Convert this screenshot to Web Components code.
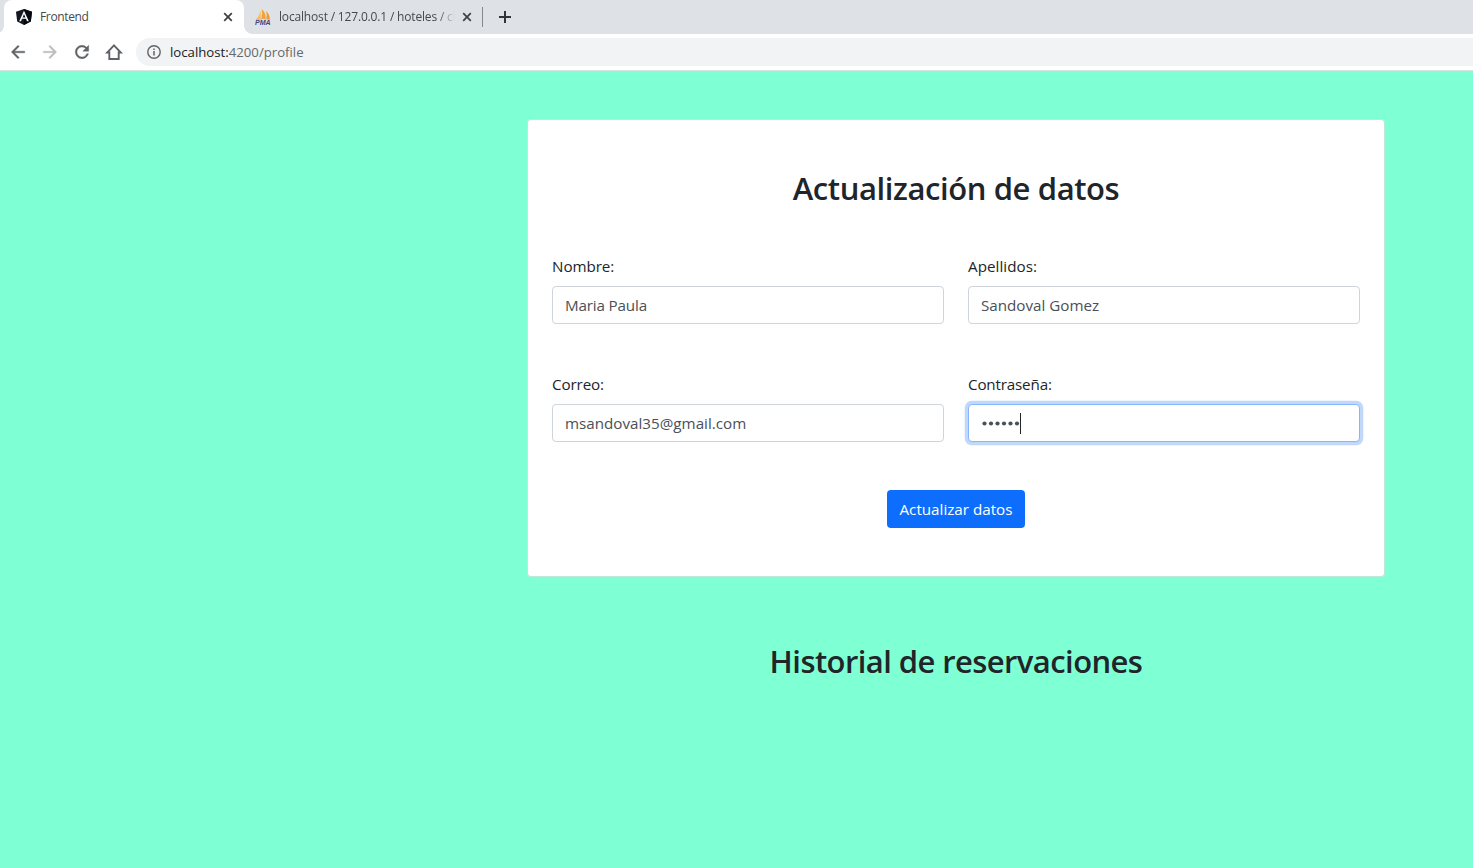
<!DOCTYPE html>
<html lang="es">
<head>
<meta charset="utf-8">
<title>Frontend</title>
<style>
html, body { margin: 0; height: 100%; overflow: hidden; }
body { font-family: "Open Sans", "Noto Sans", sans-serif; color: #212529; background: #7fffd4; }
</style>
</head>
<body>
<app-window></app-window>
<script>
const define = (name, html, init) => {
  const template = document.createElement('template');
  template.innerHTML = html;
  customElements.define(name, class extends HTMLElement {
    constructor() {
      super();
      this.attachShadow({ mode: 'open' }).append(template.content.cloneNode(true));
    }
    connectedCallback() { if (init) init(this, this.shadowRoot); }
  });
};

define('browser-tab', `
<style>
:host { display: flex; align-items: center; box-sizing: border-box; height: 34px; width: 240px; padding: 0 10px 0 12px; font-size: 12px; color: #45494d; flex: none; position: relative; }
:host([active]) { background: #fff; border-radius: 8px 8px 0 0; }
:host(:not([active])) { width: 239px; padding-left: 11px; }
:host([active])::before, :host([active])::after { content: ""; position: absolute; bottom: 0; width: 8px; height: 8px; }
:host([active])::before { left: -8px; background: radial-gradient(circle at 0 0, transparent 7.5px, #fff 8px); }
:host([active])::after { right: -8px; background: radial-gradient(circle at 100% 0, transparent 7.5px, #fff 8px); }
.icon { width: 16px; height: 16px; flex: none; display: flex; }
.title { flex: 1; margin-left: 8px; white-space: nowrap; overflow: hidden; line-height: 20px; letter-spacing: var(--track, 0); }
:host(:not([active])) .title { -webkit-mask-image: linear-gradient(90deg, #000 calc(100% - 17px), transparent); mask-image: linear-gradient(90deg, #000 calc(100% - 17px), transparent); }
.close { width: 12px; height: 12px; flex: none; margin-left: 6px; }
</style>
<div class="icon"><slot name="icon"></slot></div>
<div class="title"><slot></slot></div>
<svg class="close" viewBox="0 0 12 12"><path d="M2.2 2.2 9.8 9.8M9.8 2.2 2.2 9.8" stroke="#3c4043" stroke-width="1.7"/></svg>
`);

define('tab-strip', `
<style>
:host { display: flex; height: 34px; background: #dee1e6; padding-left: 4px; align-items: center; }
.sep { width: 1px; height: 20px; background: #85898e; margin-left: -1px; }
.plus { margin-left: 15px; width: 14px; height: 14px; }
svg { display: block; }
</style>
<browser-tab active style="--track:-.36px">
  <svg slot="icon" width="16" height="16" viewBox="0 0 16 16"><path d="M8 0 16 2.7 14.8 12.6 8 16 1.2 12.6 0 2.7Z" fill="#141a24"/><path d="M8 0 16 2.7 14.8 12.6 8 16Z" fill="#05090f"/><path fill="#fff" fill-rule="evenodd" d="M8 1.8 3.2 12.2H5L6 9.8H10L11 12.2H12.8ZM8 5.1 9.4 8.4H6.6Z"/></svg>Frontend</browser-tab>
<browser-tab style="--track:-.17px">
  <svg slot="icon" width="16" height="16" viewBox="0 0 16 16"><path d="M5.8 1.5V9.5L1.2 10.2Q4.7 6 5.8 1.5Z" fill="#f7bd68"/><path d="M6.7 0Q11.5 4.5 10.4 10L6.4 9.2Q7.8 5 6.7 0Z" fill="#f6a02d"/><path d="M11.2 2Q15 6 14.8 10.3L11.3 9.5Q12.3 6 11.2 2Z" fill="#f49a24"/><path d="M1 10.5Q8 8.7 15.2 10.5" fill="none" stroke="#df9c57" stroke-width=".7"/><text x="0" y="15.7" textLength="15.7" lengthAdjust="spacingAndGlyphs" font-family="Liberation Sans" font-size="6.8" font-weight="700" font-style="italic" fill="#45457e" letter-spacing="0">PMA</text></svg>localhost / 127.0.0.1 / hoteles / clientes</browser-tab>
<div class="sep"></div>
<svg class="plus" viewBox="0 0 14 14"><path d="M7 1V13M1 7H13" stroke="#303438" stroke-width="2"/></svg>
`);

define('address-bar', `
<style>
:host { display: flex; align-items: center; box-sizing: border-box; height: 37px; background: #fff; border-bottom: 1px solid #d5e6e0; padding-left: 8px; overflow: hidden; }
.nav { width: 20px; height: 20px; flex: none; margin-right: 12px; fill: #5f6368; }
.nav.stroked { stroke: #5f6368; stroke-width: .5; }
.off { fill: #babcbe; stroke: #babcbe; stroke-width: .4; }
.url { flex: 1; height: 28px; background: #f1f3f4; border-radius: 14px 0 0 14px; display: flex; align-items: center; padding-left: 10px; font-size: 13.2px; color: #65696d; }
.url svg { width: 16px; height: 16px; margin-right: 8px; }
.text { line-height: 20px; }
b { font-weight: 400; color: #202124; }
</style>
<svg class="nav stroked" viewBox="0 0 24 24"><path d="M20 11H7.83l5.59-5.59L12 4l-8 8 8 8 1.41-1.41L7.83 13H20z"/></svg>
<svg class="nav off" viewBox="0 0 24 24"><path d="m12 4-1.41 1.41L16.17 11H4v2h12.17l-5.58 5.59L12 20l8-8z"/></svg>
<svg class="nav stroked" viewBox="0 0 24 24"><path d="M17.65 6.35A7.958 7.958 0 0 0 12 4c-4.42 0-7.99 3.58-7.99 8s3.57 8 7.99 8c3.73 0 6.84-2.55 7.73-6h-2.08A5.99 5.99 0 0 1 12 18c-3.31 0-6-2.69-6-6s2.69-6 6-6c1.66 0 3.14.69 4.22 1.78L13 11h7V4z"/></svg>
<svg class="nav" viewBox="0 0 20 20"><path d="M10 3.4 3.2 10.5H5.3V17H14.7V10.5H16.8Z" fill="none" stroke="#5f6368" stroke-width="1.9"/></svg>
<div class="url"><svg viewBox="0 0 16 16"><circle cx="8" cy="8" r="6.2" fill="none" stroke="#5f6368" stroke-width="1.4"/><path d="M8 7V11.4M8 4.5V6" stroke="#5f6368" stroke-width="1.5"/></svg><span class="text"><b>localhost:</b>4200/profile</span></div>
`);

define('form-field', `
<style>
:host { display: block; }
label { display: block; font-size: 15.2px; line-height: 24px; margin-bottom: 8px; letter-spacing: var(--label-track, 0); }
.control { display: flex; align-items: center; box-sizing: border-box; height: 38px; padding: 0 12px; border: 1px solid #ced4da; border-radius: 4px; background: #fff; color: #495057; font-size: 15.2px; line-height: 24px; letter-spacing: var(--track, 0); }
:host([focused]) .control { border-color: #86b7fe; box-shadow: 0 0 0 3.3px rgba(13,100,240,.25); }
</style>
<label><span></span></label>
<div class="control"><slot></slot></div>
`, (host, root) => { root.querySelector('span').textContent = host.getAttribute('label'); });

define('password-dots', `
<style>
:host { display: flex; align-items: center; height: 24px; padding-left: 1px; }
svg { display: block; width: 38px; height: 24px; fill: #495057; }
.caret { width: 1px; height: 21px; background: #212529; }
</style>
<svg viewBox="0 0 38 24"><circle cx="2.5" cy="12.5" r="2.1"/><circle cx="9" cy="12.5" r="2.1"/><circle cx="15.5" cy="12.5" r="2.1"/><circle cx="22" cy="12.5" r="2.1"/><circle cx="28.5" cy="12.5" r="2.1"/><circle cx="35" cy="12.5" r="2.1"/></svg><div class="caret"></div>
`);

define('section-title', `
<style>
:host { display: block; text-align: center; }
h2 { margin: 0 0 -2px; font-size: 31px; line-height: 40.4px; font-weight: 600; white-space: nowrap; letter-spacing: var(--track, 0); }
</style>
<h2><slot></slot></h2>
`);

define('primary-button', `
<style>
:host { display: flex; justify-content: center; }
button { width: 138px; height: 38px; padding: 0; border: 0; border-radius: 4px; background: #0d6efd; color: #fff; font: 15.2px/24px "Open Sans", sans-serif; white-space: nowrap; }
</style>
<button><slot></slot></button>
`);

define('profile-card', `
<style>
:host { display: block; box-sizing: border-box; width: 858px; height: 458px; background: #fff; border: 1px solid #bfe8d9; border-radius: 4px; padding: 48px 24px; }
.grid { display: grid; grid-template-columns: 392px 392px; gap: 48px 24px; margin: 48px 0; }
</style>
<section-title style="--track:-.4px">Actualización de datos</section-title>
<div class="grid">
<form-field label="Nombre:" style="--label-track:-.06px;--track:-.16px">Maria Paula</form-field>
<form-field label="Apellidos:" style="--label-track:.05px">Sandoval Gomez</form-field>
<form-field label="Correo:" style="--label-track:-.12px">msandoval35@gmail.com</form-field>
<form-field label="Contraseña:" focused style="--label-track:-.17px"><password-dots></password-dots></form-field>
</div>
<primary-button>Actualizar datos</primary-button>
`);

define('app-window', `
<style>
:host { display: block; height: 100vh; background: #7fffd4; }
main { width: 858px; margin-left: 527px; padding-top: 48px; }
.history { margin-top: 64px; --track: -.58px; }
</style>
<tab-strip></tab-strip>
<address-bar></address-bar>
<main>
<profile-card></profile-card>
<section-title class="history">Historial de reservaciones</section-title>
</main>
`);
</script>
</body>
</html>
